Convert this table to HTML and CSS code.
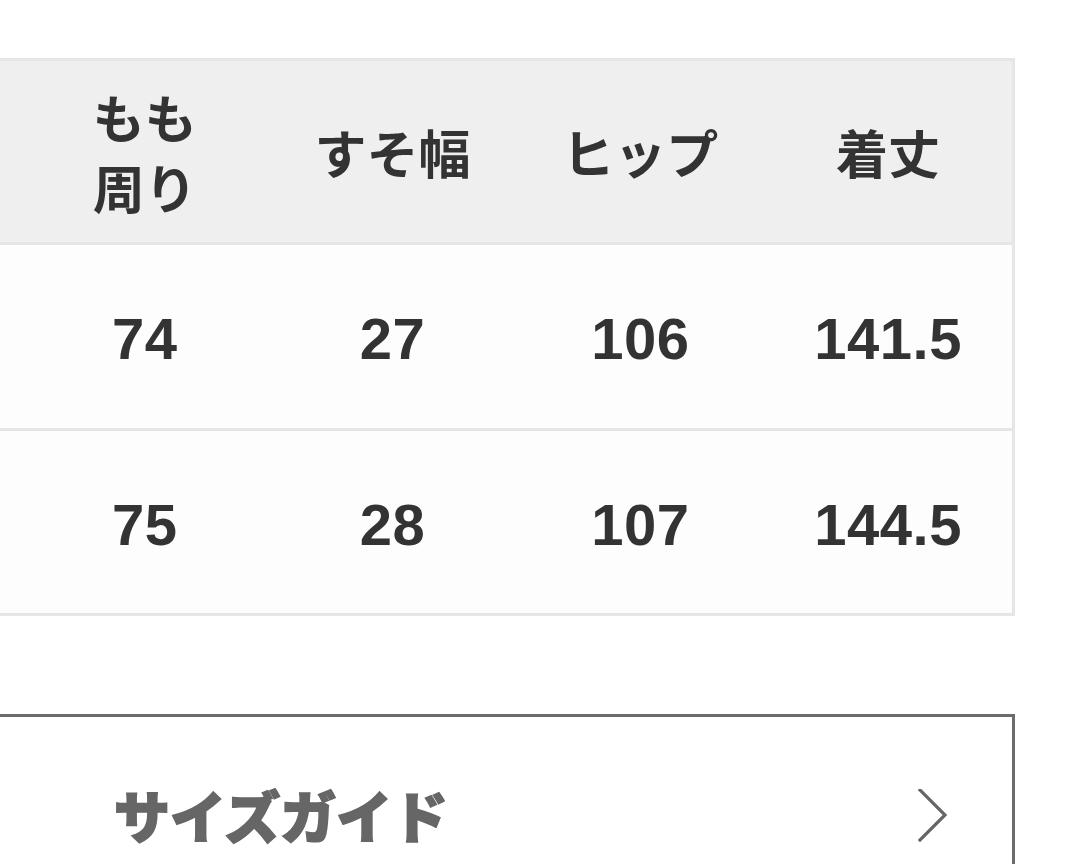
FILE: index.html
```html
<!DOCTYPE html>
<html lang="ja">
<head>
<meta charset="utf-8">
<title>サイズ表</title>
<link rel="stylesheet" href="styles.css">
</head>
<body>
<main class="page">
  <section class="size-table">
    <div class="row head">
      <div class="cell">もも<br>周り</div>
      <div class="cell">すそ幅</div>
      <div class="cell">ヒップ</div>
      <div class="cell">着丈</div>
    </div>
    <div class="row">
      <div class="cell num">74</div>
      <div class="cell num">27</div>
      <div class="cell num">106</div>
      <div class="cell num">141.5</div>
    </div>
    <div class="row last">
      <div class="cell num">75</div>
      <div class="cell num">28</div>
      <div class="cell num">107</div>
      <div class="cell num">144.5</div>
    </div>
  </section>
  <a class="guide" href="#">
    <span class="guide-label">サイズガイド</span>
    <svg class="chev" width="32" height="54" viewBox="0 0 32 54" aria-hidden="true">
      <path d="M4 1 L29 26 L4 51" fill="none" stroke="#666" stroke-width="3.2" stroke-linecap="square"/>
    </svg>
  </a>
</main>
</body>
</html>
```

FILE: styles.css
```css
html, body {
  margin: 0;
  padding: 0;
  background: #ffffff;
}
body {
  width: 1080px;
  height: 864px;
  overflow: hidden;
  font-family: "Noto Sans CJK JP", "Noto Sans", sans-serif;
  color: #333333;
}
.page {
  padding-top: 58px;
  width: 1015px;
}
.size-table {
  border: 3px solid #e6e6e6;
  border-left: none;
  border-bottom: none;
  background: #fdfdfd;
}
.row {
  display: grid;
  grid-template-columns: repeat(4, 1fr);
  padding-left: 21px;
  height: 183px;
  border-bottom: 3px solid #e6e6e6;
  align-items: center;
}
.row.head {
  background: #efefef;
  height: 181px;
}
.row.last {
  height: 182px;
}
.cell {
  text-align: center;
  font-size: 52px;
  font-weight: 700;
  line-height: 70px;
}
.cell.num {
  font-family: "Liberation Sans", Arial, sans-serif;
  font-size: 58px;
  line-height: 1.2;
  padding-top: 5px;
  letter-spacing: 0.5px;
}
.guide {
  display: flex;
  align-items: center;
  justify-content: space-between;
  margin-top: 98px;
  margin-left: -20px;
  height: 200px;
  border: 3px solid #6b6b6b;
  border-bottom: none;
  padding: 0 64px 0 131px;
  text-decoration: none;
  box-sizing: border-box;
}
.guide-label {
  font-size: 56px;
  font-weight: 900;
  color: #666666;
  -webkit-text-stroke: 1.6px #666666;
  line-height: 1;
  padding-bottom: 4px;
}
.chev {
  display: block;
}
```
